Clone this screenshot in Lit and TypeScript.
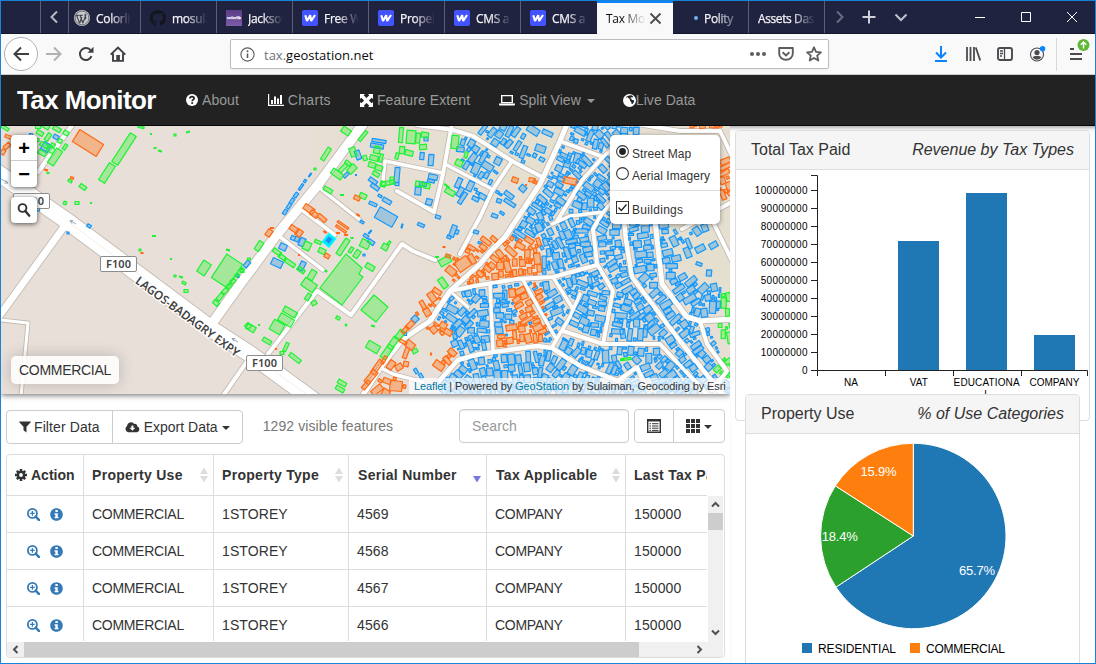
import { LitElement, html, css, svg } from "lit";
import { customElement } from "lit/decorators.js";

/* ---------- geometry of the map ---------- */
type Pt = [number, number];
type Road = { w: number; p: Pt[] };
type Box = [number, number, number, number, number];
type Kind = "blue" | "green" | "orange";

const roads: Road[] = [
  { w: 3, p: [[0, 320], [28, 323], [21, 396]] },
  { w: 7, p: [[66, 224], [0, 315]] },
  { w: 4.5, p: [[73, 124], [38, 172]] },
  { w: 4, p: [[248, 360], [223, 396]] },
  { w: 3.5, p: [[317, 186], [360, 220]] },
  { w: 3.5, p: [[298, 207], [335, 235]] },
  { w: 3.5, p: [[279, 236], [323, 270]] },
  { w: 4, p: [[268, 354], [317, 291], [351, 315], [402, 244], [413, 251], [435, 260]] },
  { w: 3.5, p: [[383, 180], [385, 161], [443, 173]] },
  { w: 4, p: [[452, 124], [443, 174], [434, 212], [397, 191]] },
  { w: 4, p: [[417, 125], [453, 130], [473, 136], [512, 161], [542, 177]] },
  { w: 3.5, p: [[445, 164], [490, 188]] },
  { w: 4, p: [[512, 161], [492, 191], [480, 217], [460, 254]] },
  { w: 5, p: [[361, 398], [383, 364], [403, 339], [430, 321], [450, 291], [480, 264], [490, 252], [505, 237], [540, 184], [560, 141], [567, 124]] },
  { w: 4, p: [[450, 291], [480, 285], [517, 279], [553, 277], [597, 265]] },
  { w: 3, p: [[453, 294], [468, 307]] },
  { w: 3.5, p: [[383, 369], [393, 374], [423, 382]] },
  { w: 4.5, p: [[440, 380], [458, 360], [480, 354], [537, 346], [552, 348], [580, 366], [618, 381], [637, 367], [647, 389]] },
  { w: 4, p: [[560, 141], [603, 157], [583, 179], [557, 221]] },
  { w: 4, p: [[614, 148], [603, 157]] },
  { w: 3.5, p: [[552, 224], [570, 216], [603, 212], [612, 202]] },
  { w: 4, p: [[603, 212], [593, 229], [597, 264], [613, 291], [603, 344]] },
  { w: 3.5, p: [[553, 277], [573, 309]] },
  { w: 3.5, p: [[580, 294], [570, 317], [552, 347]] },
  { w: 3.5, p: [[523, 280], [555, 337]] },
  { w: 3.5, p: [[490, 284], [493, 351]] },
  { w: 4, p: [[563, 331], [603, 344], [660, 344], [707, 394]] },
  { w: 4.5, p: [[622, 200], [626, 240], [632, 277], [680, 341], [722, 394]] },
  { w: 5, p: [[650, 180], [656, 230], [662, 284], [687, 317], [700, 321], [732, 319]] },
  { w: 4, p: [[700, 321], [707, 344], [727, 371], [712, 390]] },
  { w: 4, p: [[682, 229], [732, 202]] },
  { w: 4, p: [[700, 190], [714, 224], [732, 261]] },
  { w: 4, p: [[637, 124], [680, 131], [720, 131], [732, 156]] },
  { w: 9.5, p: [[213, 322], [241, 283], [275, 237], [317, 186], [366, 120]] },
  { w: 16, p: [[-6, 170], [67, 221], [213, 330], [250, 354], [320, 405]] },
];

const green: Box[] = [
  [124, 149, 34, 7, -57], [107, 173, 20, 7, -57], [55, 157, 17, 7, -57], [227, 271, 28, 19, -57], [204, 268, 13, 9, -57],
  [83, 187, 7, 4, 35], [70, 181, 4, 2, 30], [65, 203, 3, 3, 20], [77, 203, 4, 3, 0], [91, 203, 1, 1, 0], [154, 236, 3, 1, 0],
  [140, 250, 2, 2, 0], [181, 277, 3, 1, 20], [175, 276, 2, 2, 0], [184, 283, 4, 2, 30], [186, 291, 4, 3, 0], [171, 259, 1, 1, 0],
  [216, 303, 6, 4, 40], [220, 297, 8, 4, -50], [225, 291, 6, 4, -45], [229, 286, 5, 4, -45], [233, 281, 5, 4, -45], [237, 275, 4, 3, -45], [242, 270, 4, 3, -45],
  [228, 250, 3, 1, 10], [248, 326, 5, 5, 45], [175, 135, 2, 2, 0], [188, 132, 3, 1, -20], [155, 148, 2, 1, 0], [160, 151, 3, 1, 20], [141, 127, 6, 2, 15], [151, 134, 1, 1, 0],
  [48, 173, 2, 1, 0], [45, 126, 9, 4, 30], [57, 129, 8, 4, 30], [40, 133, 7, 4, 30], [48, 137, 8, 4, -55], [60, 141, 4, 4, 30], [66, 133, 5, 4, 30], [44, 145, 8, 4, 30], [51, 150, 7, 5, 30], [42, 153, 8, 4, 30], [53, 145, 4, 3, 30], [5, 128, 8, 3, 30], [15, 138, 3, 2, 0], [38, 127, 5, 3, 0], [65, 147, 6, 3, -55], [37, 140, 4, 3, 0],
  [346, 131, 9, 6, 35], [363, 136, 12, 3, -50], [326, 154, 14, 4, -57], [315, 169, 2, 2, 0], [353, 152, 6, 9, -20], [365, 158, 4, 5, -20],
  [377, 150, 6, 7, 15], [374, 158, 8, 5, 15], [381, 158, 3, 8, 15], [372, 165, 7, 5, 15], [379, 168, 7, 5, 15], [376, 174, 7, 4, 30], [383, 184, 5, 5, 15],
  [401, 135, 4, 15, 5], [411, 137, 9, 13, 5], [418, 138, 4, 10, 5], [402, 150, 5, 7, 5], [409, 153, 8, 5, 15], [425, 135, 7, 5, 10], [423, 147, 7, 5, -5], [397, 156, 3, 6, 15], [455, 142, 7, 13, 5], [459, 163, 7, 6, 25], [466, 155, 3, 6, 15],
  [337, 174, 12, 6, 35], [352, 169, 9, 6, -45], [343, 168, 10, 4, -45], [348, 163, 6, 3, 40], [328, 190, 9, 4, 30], [342, 195, 3, 1, 0], [363, 196, 7, 5, 25], [388, 183, 13, 4, -10], [392, 180, 4, 6, 0], [419, 184, 7, 5, 10], [427, 186, 6, 5, 10], [450, 192, 10, 5, 30], [447, 186, 6, 1, 40],
  [259, 246, 10, 5, -57], [242, 271, 4, 3, 0], [249, 259, 3, 2, 0], [277, 252, 9, 4, 35], [282, 257, 7, 4, 35], [290, 263, 11, 4, 35], [301, 270, 8, 4, 35], [312, 275, 10, 6, -60], [307, 246, 7, 8, 25], [322, 251, 7, 5, 25], [318, 242, 7, 3, 25],
  [343, 247, 18, 5, -57], [351, 250, 6, 3, -57], [357, 254, 8, 5, -57], [352, 238, 2, 1, 0], [365, 244, 9, 8, 25], [385, 247, 6, 6, 30], [389, 243, 4, 2, -50], [370, 267, 9, 5, 30], [326, 271, 2, 1, 40],
  [445, 261, 12, 7, -30], [443, 283, 11, 6, 55], [437, 257, 3, 1, 0], [309, 285, 14, 9, 35], [308, 297, 7, 4, -57], [314, 303, 5, 4, -30],
  [290, 312, 14, 6, 30], [286, 320, 15, 8, 30], [277, 327, 12, 11, 30], [251, 328, 9, 6, 30], [267, 341, 9, 4, 30], [295, 358, 13, 4, 38], [286, 347, 3, 9, 25], [282, 353, 4, 3, 0], [338, 318, 4, 3, 30], [346, 325, 2, 1, 60], [259, 325, 1, 1, 0], [373, 347, 13, 8, 30], [373, 326, 3, 1, 20],
  [387, 352, 15, 6, -55], [393, 343, 13, 6, -55], [400, 335, 10, 6, -55], [342, 383, 9, 4, 30], [340, 389, 9, 4, 30], [415, 351, 5, 4, -30], [626, 359, 10, 2, -8], [622, 360, 3, 1, 0],
];
const blue: Box[] = [
  [89, 226, 4, 3, 30], [68, 233, 2, 2, 0], [46, 147, 8, 8, 30], [56, 137, 5, 4, 30], [31, 135, 3, 3, 0], [38, 209, 3, 4, 0], [247, 264, 7, 4, -50], [238, 276, 2, 3, 0],
  [379, 141, 14, 3, 10], [377, 146, 13, 4, 10], [358, 155, 5, 9, -20], [422, 156, 4, 7, 5], [431, 160, 5, 11, 5], [426, 139, 4, 4, 0], [346, 175, 6, 3, -45], [397, 175, 5, 15, 5], [397, 184, 4, 3, 5], [433, 177, 9, 5, 12], [431, 181, 7, 3, 12], [418, 191, 6, 8, 5], [423, 184, 7, 4, 10], [429, 202, 6, 6, 15],
  [373, 181, 9, 4, 35], [375, 187, 9, 4, 35], [387, 201, 9, 4, 30], [380, 196, 4, 2, 30], [373, 204, 8, 3, 25], [386, 217, 20, 12, 30], [402, 226, 1, 4, 15], [421, 225, 7, 3, 25], [438, 217, 5, 3, 20], [453, 231, 5, 12, 20], [449, 237, 4, 3, 20], [457, 232, 3, 4, 20], [362, 222, 4, 2, 30], [370, 232, 4, 1, -50], [366, 236, 5, 3, 35], [371, 242, 7, 4, 35], [364, 255, 2, 2, 0],
  [302, 242, 5, 8, 25], [297, 239, 4, 5, 25], [293, 238, 4, 4, 25], [283, 247, 7, 6, 25], [277, 263, 11, 7, 25], [302, 266, 5, 9, 25], [285, 212, 5, 3, -55], [289, 206, 6, 3, -55], [292, 201, 6, 3, -55], [296, 195, 5, 3, -55], [301, 187, 7, 2, -55], [305, 181, 3, 2, -55], [310, 175, 4, 1, -55], [356, 175, 1, 1, 0], [415, 319, 6, 6, -45], [405, 334, 3, 3, 0], [416, 371, 3, 5, -30], [421, 376, 3, 5, -30], [476, 232, 5, 3, 20], [480, 243, 4, 2, 20], [709, 273, 5, 6, 5], [699, 264, 6, 3, 20],
];
const orange: Box[] = [
  [88, 143, 28, 14, 32], [72, 178, 3, 2, 20], [46, 170, 3, 1, 10], [7, 146, 7, 4, -40], [3, 152, 4, 5, 30], [9, 137, 8, 3, 20], [15, 149, 3, 3, 0], [142, 253, 2, 1, 0],
  [309, 209, 11, 6, 35], [314, 214, 8, 5, 35], [322, 218, 10, 4, 40], [294, 229, 9, 5, 35], [299, 233, 6, 7, 35], [269, 233, 7, 5, -55], [272, 228, 3, 1, 0], [343, 225, 13, 2, 35], [341, 229, 12, 2, 35], [338, 233, 3, 1, 0], [346, 235, 3, 1, 0], [325, 232, 3, 1, 30], [357, 198, 6, 4, 25], [327, 256, 5, 4, 30], [299, 255, 1, 1, 0], [276, 349, 1, 1, 0], [358, 215, 3, 1, 30],
  [463, 264, 14, 11, -35], [451, 271, 10, 7, 40], [472, 259, 5, 10, -30], [432, 297, 10, 6, 55], [427, 312, 8, 6, 60], [423, 305, 9, 4, 60], [410, 325, 9, 5, -45], [405, 330, 8, 4, -45], [410, 345, 9, 7, 40], [403, 342, 8, 3, 30], [406, 353, 4, 11, 20],
  [384, 360, 3, 8, 30], [377, 367, 16, 5, -55], [371, 377, 15, 6, -50], [366, 385, 10, 4, -50], [391, 365, 9, 6, -55], [399, 367, 7, 6, -30], [396, 386, 12, 10, 5], [387, 381, 8, 5, 20], [377, 390, 12, 6, -40], [406, 364, 5, 5, 10], [431, 354, 1, 2, 0], [444, 247, 2, 1, 0], [448, 256, 5, 3, 20],
  [515, 180, 6, 5, 20], [532, 180, 6, 4, 10], [526, 185, 1, 1, 0], [570, 181, 13, 6, 12], [535, 182, 4, 3, 20],
];

type Zone = { kind: Kind; tries: number; poly: Pt[] };
const zones: Zone[] = [
  { kind: "orange", tries: 2200, poly: [[449, 262], [462, 250], [492, 236], [540, 238], [540, 273], [512, 278], [480, 284], [448, 284]] },
  { kind: "orange", tries: 1300, poly: [[510, 290], [534, 282], [543, 300], [550, 330], [540, 342], [508, 342], [511, 325], [526, 322]] },
  { kind: "orange", tries: 150, poly: [[498, 335], [510, 335], [510, 350], [500, 350]] },
  { kind: "orange", tries: 300, poly: [[430, 320], [447, 325], [450, 335], [436, 332], [420, 325]] },
  { kind: "orange", tries: 300, poly: [[412, 318], [428, 294], [447, 284], [448, 293], [432, 318]] },
  { kind: "orange", tries: 300, poly: [[435, 366], [455, 350], [458, 362], [440, 378]] },
  { kind: "orange", tries: 250, poly: [[385, 374], [405, 378], [405, 394], [370, 394]] },
  { kind: "orange", tries: 200, poly: [[719, 158], [730, 158], [730, 195], [719, 195]] },
  { kind: "orange", tries: 150, poly: [[690, 124], [722, 124], [722, 131], [690, 131]] },
  { kind: "green", tries: 150, poly: [[720, 290], [731, 290], [731, 345], [720, 335]] },
  { kind: "green", tries: 300, poly: [[716, 354], [731, 360], [731, 378], [717, 375]] },
  { kind: "blue", tries: 100, poly: [[482, 155], [500, 155], [500, 196], [480, 200]] },
  { kind: "blue", tries: 330, poly: [[456, 130], [490, 146], [490, 180], [475, 178], [462, 168]] },
  { kind: "blue", tries: 140, poly: [[455, 172], [485, 190], [470, 205], [455, 192]] },
  { kind: "blue", tries: 420, poly: [[480, 124], [520, 124], [505, 155], [485, 140]] },
  { kind: "blue", tries: 40, poly: [[505, 130], [550, 130], [540, 170], [510, 160]] },
  { kind: "blue", tries: 36, poly: [[485, 220], [512, 165], [536, 180], [500, 225]] },
  { kind: "blue", tries: 50, poly: [[668, 226], [712, 226], [716, 250], [684, 262], [672, 262]] },
  {
    kind: "blue", tries: 36000, poly: [[452, 296], [490, 283], [540, 278], [540, 240], [503, 243], [541, 188], [566, 124], [640, 124],
      [612, 205], [660, 200], [674, 272], [721, 290], [721, 318], [704, 322], [730, 372], [731, 395], [640, 395], [445, 395], [440, 381], [460, 358], [444, 330], [434, 320]],
  },
];

let seed = 20117;
const rnd = () => {
  seed = (seed * 1664525 + 1013904223) >>> 0;
  return seed / 4294967296;
};
const inside = (x: number, y: number, p: Pt[]) => {
  let r = false;
  for (let i = 0, j = p.length - 1; i < p.length; j = i++) {
    if (p[i][1] > y !== p[j][1] > y && x < ((p[j][0] - p[i][0]) * (y - p[i][1])) / (p[j][1] - p[i][1]) + p[i][0]) r = !r;
  }
  return r;
};
const nearest = (x: number, y: number) => {
  let d = 1e9, a = 0;
  for (const r of roads) {
    for (let i = 1; i < r.p.length; i++) {
      const [x1, y1] = r.p[i - 1], [x2, y2] = r.p[i];
      const dx = x2 - x1, dy = y2 - y1;
      const t = Math.max(0, Math.min(1, ((x - x1) * dx + (y - y1) * dy) / (dx * dx + dy * dy)));
      const e = Math.hypot(x - x1 - t * dx, y - y1 - t * dy) - r.w / 2;
      if (e < d) { d = e; a = Math.atan2(dy, dx); }
    }
  }
  return { d, a: (a * 180) / Math.PI };
};

const built: Record<Kind, Box[]> = { blue: [...blue], green: [...green], orange: [...orange] };
const placed: Box[] = [...blue, ...green, ...orange];
for (const z of zones) {
  const xs = z.poly.map((q) => q[0]), ys = z.poly.map((q) => q[1]);
  const x0 = Math.min(...xs), y0 = Math.min(...ys), dx = Math.max(...xs) - x0, dy = Math.max(...ys) - y0;
  for (let k = 0; k < z.tries; k++) {
    const x = x0 + rnd() * dx, y = y0 + rnd() * dy;
    if (!inside(x, y, z.poly)) continue;
    const n = nearest(x, y);
    const small = k > z.tries * 0.6;
    const w = small ? 1.5 + rnd() * 2.5 : 3.5 + rnd() * 3.5, h = small ? 1.5 + rnd() * 4 : 6 + rnd() * 7;
    if (n.d < h / 2 + 0.5) continue;
    const rad = (n.a * Math.PI) / 180, c = Math.cos(rad), s = Math.sin(rad);
    let hit = false;
    for (const b of placed) {
      const ux = b[0] - x, uy = b[1] - y;
      if (Math.abs(ux) > 22 || Math.abs(uy) > 22) continue;
      if (Math.abs(ux * c + uy * s) < (w + b[2]) / 2 + 0.35 && Math.abs(-ux * s + uy * c) < (h + b[3]) / 2 + 0.35) { hit = true; break; }
    }
    if (hit) continue;
    const box: Box = [x, y, w, h, n.a + (rnd() - 0.5) * 16];
    placed.push(box);
    built[z.kind].push(box);
  }
}
const boxPath = ([x, y, w, h, a]: Box) => {
  const r = (a * Math.PI) / 180, c = Math.cos(r), s = Math.sin(r);
  const q = (u: number, v: number) => `${(x + u * c - v * s).toFixed(1)} ${(y + u * s + v * c).toFixed(1)}`;
  return `M${q(-w / 2, -h / 2)}L${q(w / 2, -h / 2)}L${q(w / 2, h / 2)}L${q(-w / 2, h / 2)}Z`;
};
const kindPath = (k: Kind) => built[k].map(boxPath).join("");
const line = (p: Pt[]) => p.map((q) => q.join(",")).join(" ");

/* ---------- icons ---------- */
const icon = (name: string, w: number, h: number, body: unknown, box = `0 0 ${w} ${h}`) =>
  html`<svg class="ic ${name}" width=${w} height=${h} viewBox=${box}>${body}</svg>`;

const infoCircle = (s: number) => icon("info", s, s, svg`<path fill="currentColor" d="M256 8C119 8 8 119 8 256s111 248 248 248 248-111 248-248S393 8 256 8zm-45 72h95v75h-95zm125 325H180v-55h31V265h-31v-55h125v140h31z"/>`, "0 0 512 512");
const question = icon("q", 12, 12, svg`<circle cx="6" cy="6" r="6" fill="#fff"/><path d="M3.900 4.500C4 3.300 4.900 2.700 6 2.700c1.200 0 2.100.7 2.100 1.700C8.100 5.700 6.200 5.700 6.200 7.200" fill="none" stroke="#222" stroke-width="1.700"/><rect x="5.300" y="8.200" width="1.800" height="1.700" fill="#222"/>`);
const bars = icon("b", 16, 14, svg`<path fill="#fff" d="M0 1h1.200v10.800H16V13H0zM3 7h2v4H3zM6 3.500h2V11H6zM9 5.500h2V11H9zM12 2h2v9h-2z"/>`);
const extent = icon("e", 13, 13, svg`<path fill="#fff" d="M0 0h5L3.700 1.300 6.500 4.100 9.300 1.300 8 0h5v5L11.700 3.700 8.900 6.500 11.700 9.300 13 8v5H8l1.300-1.300-2.800-2.800-2.800 2.800L5 13H0V8l1.300 1.300 2.800-2.800-2.800-2.800L0 5z"/>`);
const laptop = icon("l", 16, 12, svg`<path fill="none" stroke="#fff" stroke-width="1.400" d="M2.700 1.600h10.600v7H2.700z"/><path fill="#fff" d="M0 9.500h16v1q0 1-1 1H1q-1 0-1-1z"/>`);
const globe = icon("g", 13, 13, svg`<circle cx="6.500" cy="6.500" r="6.500" fill="#fff"/><path fill="#222" d="M6.200 1.500 8.500 1.200l1.800 1.500-1 .9-1.300-.3-.8 1 1.300.5.400 1.200 1.700.1.500 1.400-1.200 2.200-1.300.4-.3-2-1.200-1.200-.2-1.500L5.700 4.200 4.300 3.100 3.100 4l.1-1.200z"/>`);
const filter = icon("f", 12, 12, svg`<path fill="#333" d="M.3.500h11.400q.3.600-.2 1.100L7.500 5.700V11.500L4.500 9.300V5.700L.5 1.600Q0 1.100.3.500z"/>`);
const cloud = icon("c", 15, 12, svg`<path fill="#333" d="M3.500 11.300A3.400 3.400 0 0 1 2 5.100 4 4 0 0 1 9.300 3a2.300 2.300 0 0 1 3 2.500A3 3 0 0 1 12 11.300z"/><path fill="#fff" d="M6.400 4.500h2v2.300h1.900L7.400 9.800 4.500 6.800h1.900z"/>`);
const gear = icon("gear", 12, 12, svg`<g stroke="#333" stroke-width="2.600"><path d="M6 0v12M0 6h12M1.800 1.800l8.400 8.400M10.200 1.800l-8.400 8.400"/></g><circle cx="6" cy="6" r="4.300" fill="#333"/><circle cx="6" cy="6" r="1.900" fill="#fff"/>`);
const zoomIn = icon("z", 13, 13, svg`<g fill="none" stroke="#337ab7"><circle cx="5.400" cy="5.400" r="4.500" stroke-width="1.800"/><path d="M8.700 8.700l3.400 3.400" stroke-width="2.500" stroke-linecap="round"/><path d="M5.400 3.100v4.600M3.100 5.400h4.600" stroke-width="1.200"/></g>`);

/* browser chrome */
const wp = icon("wp", 16, 16, svg`<circle cx="8" cy="8" r="8" fill="#c9cacc"/><circle cx="8" cy="8" r="6.900" fill="none" stroke="#55575f" stroke-width=".8"/><path d="M2.600 5.400l3 8M6 5.400l2.900 7.800M5.600 13.200L7.900 7M8.900 13l3-8M1.800 5.400h3M5.300 5.400h3.400M12 4.500q-1.600-.6-.8 1.400 1 1.700.4 3.300" fill="none" stroke="#44464f" stroke-width="1.200"/>`);
const gh = icon("gh", 16, 16, svg`<path fill="#15161c" fill-rule="evenodd" d="M8 0C3.580 0 0 3.580 0 8c0 3.540 2.290 6.530 5.470 7.590.4.070.55-.17.55-.38 0-.19-.01-.82-.01-1.490-2.010.37-2.530-.49-2.690-.94-.09-.23-.48-.94-.82-1.130-.28-.15-.68-.52-.01-.53.63-.01 1.080.58 1.230.82.72 1.210 1.870.87 2.330.66.07-.52.28-.87.51-1.070-1.780-.2-3.640-.89-3.640-3.950 0-.87.31-1.590.82-2.150-.08-.2-.36-1.020.08-2.120 0 0 .67-.21 2.200.82.64-.18 1.320-.27 2-.27s1.360.09 2 .27c1.530-1.040 2.200-.82 2.200-.82.44 1.100.16 1.920.08 2.120.51.56.82 1.270.82 2.150 0 3.070-1.870 3.750-3.650 3.950.29.25.54.73.54 1.480 0 1.070-.01 1.930-.01 2.200 0 .21.15.46.55.38A8.010 8.010 0 0 0 16 8c0-4.420-3.580-8-8-8z"/>`);
const colorlib = html`<span class="clib">colorlib</span>`;
const webflow = html`<svg width="16" height="16" viewBox="0 0 16 16"><rect width="16" height="16" rx="2" fill="#4353ff"/><path d="M3.300 5.300L5 11L8.200 5.300L9.200 11L13 5" fill="none" stroke="#fff" stroke-width="2.100" stroke-linejoin="bevel"/></svg>`;

const chev = (d: string, c: string, w = 16) => html`<svg width=${w} height="16" viewBox="0 0 16 16"><path d=${d} fill="none" stroke=${c} stroke-width="2"/></svg>`;

type Tab = { ico?: unknown; text: string; cls?: string };
const tabs: Tab[] = [
  { ico: wp, text: "Colorlib", cls: "first" },
  { ico: gh, text: "mosula" },
  { ico: colorlib, text: "Jackson" },
  { ico: webflow, text: "Free W" },
  { ico: webflow, text: "Propel" },
  { ico: webflow, text: "CMS a" },
  { ico: webflow, text: "CMS a", cls: "nob" },
  { text: "Tax Mon", cls: "active" },
  { ico: html`<i class="dot"></i>`, text: "Polity", cls: "loading" },
  { text: "Assets Dash", cls: "last" },
];

@customElement("browser-chrome")
class BrowserChrome extends LitElement {
  static styles = css`
    :host { display: block; font-family: "Open Sans", "Noto Sans", sans-serif; }
    svg { display: block; flex: none; }
    .tabs { display: flex; height: 33px; background: #202340; box-sizing: border-box; border-bottom: 1px solid #15152b; color: #f4f4f8; }
    .lead, .prev, .tab { box-sizing: border-box; flex: none; border-right: 1px solid #5c5e74; height: 32px; }
    .lead { width: 40px; }
    .prev { width: 28px; display: flex; align-items: center; justify-content: center; }
    .tab { width: 76px; display: flex; align-items: center; gap: 6px; padding: 2px 9px 0; overflow: hidden; font-size: 12px; letter-spacing: -0.3px; -webkit-text-stroke: 0.25px; }
    .tab.first { width: 72px; padding-left: 5px; }
    .tab.nob, .tab.active { border-right: 0; }
    .tab.active { background: #f9f9fa; color: #0c0c0d; border-top: 2px solid #0a84ff; padding-top: 0; height: 33px; -webkit-text-stroke: 0; gap: 3px; padding-right: 11px; }
    .tab.loading { padding-left: 20px; gap: 6px; }
    .txt { flex: 1; overflow: hidden; white-space: nowrap; -webkit-mask-image: linear-gradient(90deg, #000 40%, transparent 100%); mask-image: linear-gradient(90deg, #000 40%, transparent 100%); }
    .last { letter-spacing: -0.4px; }
    .last .txt { -webkit-mask-image: linear-gradient(90deg, #000 60%, transparent 100%); mask-image: linear-gradient(90deg, #000 60%, transparent 100%); }
    .loading .txt { -webkit-mask-image: none; mask-image: linear-gradient(90deg, #000 30%, #0006 80%); }
    .dot { width: 4px; height: 4px; border-radius: 50%; background: #6fb4f5; flex: none; margin-left: 1px; }
    .clib { width: 16px; height: 16px; flex: none; background: linear-gradient(#5a3d86, #7d5ca8); color: #fff; font-size: 4px; line-height: 15px; text-align: center; letter-spacing: 0; }
    .ctl { display: flex; align-items: center; flex: 1; padding-left: 6px; }
    .ctl svg.plus { margin-left: 14px; }
    .ctl svg.down { margin-left: 16px; }
    .win { display: flex; margin-left: auto; gap: 34px; padding-right: 17px; align-items: center; }
    .bar { display: flex; align-items: center; height: 41px; box-sizing: border-box; background: #f9f9fa; border-bottom: 1px solid #ccc; padding-left: 3px; }
    .btn { width: 32px; height: 34px; display: grid; place-items: center; flex: none; }
    .back { width: 32px; height: 32px; border: 1px solid #b1b1b3; border-radius: 50%; background: #fff; }
    .url { margin-left: 96px; width: 599px; height: 30px; box-sizing: border-box; border: 1px solid #bdbdbf; border-radius: 2px; background: #fff; display: flex; align-items: center; padding: 0 6px 0 9px; font-size: 13px; box-shadow: 0 1px 3px #0000000d; }
    .addr { margin-left: 9px; color: #0c0c0d; letter-spacing: 0; flex: 1; padding-top: 1px; }
    .addr span { color: #737378; }
    .url .acts { display: flex; gap: 12px; align-items: center; }
    .right { display: flex; align-items: center; margin-left: 96px; }
    .sep { width: 1px; height: 33px; background: #d7d7db; margin: 0 5px 0 3px; }
  `;
  render() {
    return html`
      <div class="tabs">
        <div class="lead"></div>
        <div class="prev">${chev("M10 2.500L4.500 8L10 13.500", "#b8b9c4")}</div>
        ${tabs.map((t) => html`<div class="tab ${t.cls ?? ""}">${t.ico ?? ""}<span class="txt">${t.text}</span>${t.cls === "active"
          ? html`<svg width="13" height="13" viewBox="0 0 13 13"><path d="M1.500 1.500l10 10M11.500 1.500l-10 10" stroke="#4a4a4f" stroke-width="1.800"/></svg>` : ""}</div>`)}
        <div class="ctl">
          ${chev("M6 2.500L11.500 8L6 13.500", "#6b6d80")}
          <svg class="plus" width="16" height="16" viewBox="0 0 16 16"><path d="M8 1.500v13M1.500 8h13" stroke="#d0d0d8" stroke-width="2"/></svg>
          <svg class="down" width="16" height="16" viewBox="0 0 16 16"><path d="M2.500 5.500L8 11L13.500 5.500" fill="none" stroke="#c0c1cb" stroke-width="2"/></svg>
          <div class="win">
            <svg width="12" height="12"><path d="M1 6.500h10" stroke="#fff"/></svg>
            <svg width="12" height="12"><path d="M1.500 1.500h9v9h-9z" fill="none" stroke="#fff"/></svg>
            <svg width="12" height="12"><path d="M1 1l10 10M11 1L1 11" stroke="#fff"/></svg>
          </div>
        </div>
      </div>
      <div class="bar">
        <div class="btn back"><svg width="18" height="18" viewBox="0 0 18 18"><path d="M17 9H2.500M9 2.500L2.500 9L9 15.500" fill="none" stroke="#3f3f44" stroke-width="2"/></svg></div>
        <div class="btn"><svg width="18" height="18" viewBox="0 0 18 18"><path d="M1 9h14.500M9 2.500L15.500 9L9 15.500" fill="none" stroke="#b1b1b3" stroke-width="2"/></svg></div>
        <div class="btn"><svg width="16" height="16" viewBox="0 0 16 16"><path d="M13.500 10.200A6 6 0 1 1 12.800 4.500" fill="none" stroke="#3f3f44" stroke-width="2"/><path d="M15.500 0.800v6h-6z" fill="#3f3f44"/></svg></div>
        <div class="btn"><svg width="16" height="16" viewBox="0 0 16 16"><path d="M.7 8.600L8 1.500l7.300 7.100M3 7.500v7.400h10V7.500" fill="none" stroke="#3f3f44" stroke-width="1.900"/><path d="M6.300 9h3.600v6H6.300z" fill="#3f3f44"/></svg></div>
        <div class="url">
          <svg width="15" height="15" viewBox="0 0 15 15"><circle cx="7.500" cy="7.500" r="6.600" fill="none" stroke="#5c5c61" stroke-width="1.100"/><path d="M7.500 6.500v4.500" stroke="#5c5c61" stroke-width="1.600"/><circle cx="7.500" cy="4.300" r="1" fill="#5c5c61"/></svg>
          <div class="addr"><span>tax.</span>geostation.net</div>
          <div class="acts">
            <svg width="16" height="16" viewBox="0 0 16 16"><g fill="#5c5c61"><circle cx="2" cy="8" r="2"/><circle cx="8" cy="8" r="2"/><circle cx="14" cy="8" r="2"/></g></svg>
            <svg width="16" height="16" viewBox="0 0 16 16"><path d="M1.200 2h13.600v5.500a6.800 6.300 0 0 1-13.600 0z" fill="none" stroke="#5c5c61" stroke-width="1.900" stroke-linejoin="round"/><path d="M4.600 6.300L8 9.500l3.400-3.200" fill="none" stroke="#5c5c61" stroke-width="1.900"/></svg>
            <svg width="16" height="16" viewBox="0 0 16 16"><path d="M8 1.300l2 4.500 4.900.5-3.700 3.300 1.100 4.900L8 12l-4.300 2.500 1.100-4.900L1.100 6.300 6 5.800z" fill="none" stroke="#5c5c61" stroke-width="1.800" stroke-linejoin="round"/></svg>
          </div>
        </div>
        <div class="right">
          <div class="btn"><svg width="16" height="16" viewBox="0 0 16 16"><path d="M8 0v11.500M3 6.500l5 5 5-5M2 15h12" fill="none" stroke="#0a84ff" stroke-width="2"/></svg></div>
          <div class="btn"><svg width="16" height="16" viewBox="0 0 16 16"><path d="M2 1v14M5.500 1v14M9 1v14M10.800 1.500l4.400 13" stroke="#4a4a4f" stroke-width="1.800"/></svg></div>
          <div class="btn"><svg width="16" height="16" viewBox="0 0 16 16"><rect x="1" y="2" width="14" height="12" rx="2" fill="none" stroke="#4a4a4f" stroke-width="1.900"/><path d="M7.500 2v12M3 5h3M3 7.500h3M3 10h2" stroke="#4a4a4f" stroke-width="1.300"/></svg></div>
          <div class="btn"><svg width="17" height="16" viewBox="0 0 17 16"><circle cx="8" cy="8.500" r="6.500" fill="none" stroke="#4a4a4f" stroke-width="1.100"/><circle cx="8" cy="6.500" r="2.600" fill="#4a4a4f"/><path d="M3.500 11.300q1-1.500 4.500-1.500t4.500 1.500a5.500 5.500 0 0 1-9 0z" fill="#4a4a4f"/><circle cx="13.600" cy="2.800" r="2.700" fill="#0a84ff"/></svg></div>
          <div class="sep"></div>
          <div class="btn"><svg width="24" height="32" viewBox="0 0 24 32"><path d="M4 11h4M4 16h12M4 21h12" stroke="#4a4a4f" stroke-width="2"/><circle cx="17.500" cy="7" r="6" fill="#5fb832"/><path d="M17.500 10.500V4.500M14.700 6.700l2.800-2.700 2.800 2.700" fill="none" stroke="#fff" stroke-width="1.500"/></svg></div>
        </div>
      </div>`;
  }
}

@customElement("tax-map")
class TaxMap extends LitElement {
  static styles = css`
    :host { display: block; position: relative; height: 268px; box-shadow: 0 1px 6px #0009; font-family: "Liberation Sans", Arial, sans-serif; color: #333; }
    .canvas { display: block; width: 729px; height: 268px; }
    .zoom, .find, .layers, .note, .attr { position: absolute; }
    .zoom, .find { left: 10px; width: 26px; background: #fff; border-radius: 4px; box-shadow: 0 1px 5px #000000a6; }
    .zoom { top: 9px; }
    .zoom b { display: block; height: 25px; text-align: center; font: bold 20px/27px "Liberation Sans", Arial, sans-serif; color: #000; }
    .zoom b + b { border-top: 1px solid #ccc; line-height: 26px; height: 26px; }
    .find { top: 71px; height: 26px; display: grid; place-items: center; }
    .layers { left: 609px; top: 9px; width: 110px; height: 89px; box-sizing: border-box; background: #fff; border-radius: 5px; box-shadow: 0 1px 5px #0006; padding: 5px 0 0 6px; font-size: 12px; }
    .layers label { display: flex; align-items: center; height: 22px; gap: 3px; letter-spacing: 0.05px; }
    .layers label span { padding-top: 5px; white-space: nowrap; }
    .layers svg { flex: none; }
    .rule { height: 0; border-top: 1px solid #ddd; margin: 6px 0 5px -6px; }
    .layers .last { letter-spacing: 0.3px; }
    .note { left: 10px; top: 230px; width: 108px; height: 28px; border-radius: 5px; background: #ffffffdd; box-shadow: 0 0 15px #0003; font-size: 14px; line-height: 29px; text-align: center; letter-spacing: -0.3px; }
    .attr { right: 0; bottom: 0; height: 16px; width: 316px; padding-left: 5px; background: #ffffffb3; font-size: 11px; line-height: 17px; white-space: nowrap; letter-spacing: -0.1px; }
    .attr a { color: #0078a8; }
    .street { font: 600 12px "Noto Sans", sans-serif; fill: #444; stroke: #fff; stroke-width: 2.5px; paint-order: stroke; }
    .shield { font: 600 11px "Noto Sans", sans-serif; fill: #444; }
  `;
  render() {
    const shield = (x: number, y: number) => svg`<rect x=${x} y=${y} width="36" height="15" rx="1.500" fill="#fff" stroke="#8d8d8d"/><text class="shield" x=${x + 18} y=${y + 11.5} text-anchor="middle" textLength="25">F100</text>`;
    return html`
      <svg class="canvas" viewBox="1 126 729 268">
        <rect x="0" y="120" width="740" height="280" fill="#e8dfd9"/>
        <path d="M312 120H740V400H470L400 330 440 290 405 250 350 225 310 180z" fill="#e7dfd3"/>
        <path d="M440 126H570L540 185 440 175zM655 200H735V300L690 285 665 225z" fill="#e4dfce"/>
        <g fill="none" stroke="#c3bbb3" stroke-linecap="round" stroke-linejoin="round">${roads.map((r) => svg`<polyline points=${line(r.p)} stroke-width=${r.w + 1.8}/>`)}</g>
        <g fill="none" stroke="#fff" stroke-linecap="round" stroke-linejoin="round">${roads.map((r) => svg`<polyline points=${line(r.p)} stroke-width=${r.w}/>`)}</g>
        <path d="M67 221L213 330M262 362L310 397" fill="none" stroke="#eeeae6" stroke-width=".7"/>
        <path d="M76 224l-6-3.500m2 3l-2-3 3.500.200M1 179l7 4m-2.500-3l2.500 3-3.700.100M238 342l-6-3.500m2 3l-2-3 3.500.200" fill="none" stroke="#8797a5" stroke-width=".8"/>
        <g stroke-linejoin="round" stroke-width="1.200">
          <path d=${kindPath("blue")} fill="#2f9be8" fill-opacity=".38" stroke="#1498fb"/>
          <path d="${kindPath("green")}M346 254L362 268L359 274L363 277L342 305L320 288ZM374 295L388 307L376 322L361 310Z" fill="#35f535" fill-opacity=".38" stroke="#1df233"/>
          <path d=${kindPath("orange")} fill="#ff7a1f" fill-opacity=".42" stroke="#ff6a14"/>
        </g>
        <g transform="rotate(-52 329 241)"><rect x="324" y="236" width="11" height="9" fill="#00e5ff" stroke="#1ff"/><rect x="327" y="238" width="5.500" height="4.500" fill="#1e8cf0"/></g>
        ${shield(13.5, 193.5)}${shield(100.5, 256.5)}${shield(246.5, 355.5)}
        <text class="street" transform="translate(134.500 282.500) rotate(36.500)" textLength="126">LAGOS-BADAGRY EXPY</text>
      </svg>
      <div class="zoom"><b>+</b><b>−</b></div>
      <div class="find"><svg width="16" height="16" viewBox="0 0 16 16"><circle cx="6.500" cy="6" r="3.900" fill="none" stroke="#333" stroke-width="1.900"/><path d="M9.300 9l4 4.700" stroke="#333" stroke-width="2.400" stroke-linecap="round"/></svg></div>
      <div class="layers">
        <label><svg width="13" height="13"><circle cx="6.500" cy="6.500" r="5.900" fill="#fff" stroke="#333" stroke-width="1.100"/><circle cx="6.500" cy="6.500" r="3.400" fill="#222"/></svg><span>Street Map</span></label>
        <label><svg width="13" height="13"><circle cx="6.500" cy="6.500" r="5.900" fill="#fff" stroke="#333" stroke-width="1.100"/></svg><span>Aerial Imagery</span></label>
        <div class="rule"></div>
        <label class="last"><svg width="13" height="13"><rect x=".5" y=".5" width="12" height="12" fill="#fff" stroke="#333"/><path d="M2.500 6.500l2.800 3L10.500 3.500" fill="none" stroke="#222" stroke-width="1.300"/></svg><span>Buildings</span></label>
      </div>
      <div class="note">COMMERCIAL</div>
      <div class="attr"><a>Leaflet</a> | Powered by <a>GeoStation</a> by Sulaiman, Geocoding by Esri</div>`;
  }
}

const cols = [
  { key: "Property Use", sort: "both" },
  { key: "Property Type", sort: "both" },
  { key: "Serial Number", sort: "desc" },
  { key: "Tax Applicable", sort: "both" },
  { key: "Last Tax Paid", sort: "none" },
];
const rows = ["4569", "4568", "4567", "4566"].map((n) => ["COMMERCIAL", "1STOREY", n, "COMPANY", "150000"]);

@customElement("feature-table")
class FeatureTable extends LitElement {
  static styles = css`
    :host { display: block; padding: 15px 5px 0; font: 14px "Liberation Sans", Arial, sans-serif; color: #333; }
    svg { display: block; flex: none; }
    .tools { display: flex; align-items: flex-start; height: 45px; }
    .group { display: flex; border: 1px solid #ccc; border-radius: 4px; height: 34px; box-sizing: border-box; background: #fff; }
    .left { margin-top: 1px; }
    .b { display: flex; align-items: center; gap: 4px; padding: 0 12px; box-sizing: border-box; white-space: nowrap; }
    .left .b:first-child { gap: 3px; padding-right: 12px; letter-spacing: 0.1px; }
    .b + .b { border-left: 1px solid #ccc; }
    .caret { width: 0; height: 0; border: 4px solid transparent; border-top-color: #333; border-bottom: 0; margin-top: 2px; }
    .count { margin-left: 20px; line-height: 34px; color: #777; letter-spacing: 0.1px; flex: 1; }
    .search { width: 170px; height: 34px; box-sizing: border-box; border: 1px solid #ccc; border-radius: 4px; color: #999; padding-left: 12px; line-height: 33px; letter-spacing: 0.1px; margin-right: 5px; box-shadow: inset 0 1px 1px #00000013; }
    .frame { width: 719px; height: 204px; box-sizing: border-box; border: 1px solid #ddd; border-radius: 4px; overflow: hidden; display: grid; grid-template-columns: 701px 16px; grid-template-rows: 41px 145px 16px; }
    .head, .row { display: grid; grid-template-columns: 77px 130px 135px 138px 139px 160px; }
    .head { grid-area: 1 / 1; font-weight: bold; overflow: hidden; letter-spacing: 0.3px; margin-right: 1px; }
    .body { grid-area: 2 / 1; overflow: hidden; margin-right: 1px; }
    .cell { box-sizing: border-box; border-right: 1px solid #ddd; border-bottom: 1px solid #ddd; padding: 0 8px; display: flex; align-items: center; white-space: nowrap; }
    .head .cell:nth-child(4), .head .cell:nth-child(5) { padding-left: 9px; }
    .head .cell { height: 41px; justify-content: space-between; padding-right: 4px; }
    .head .act { justify-content: flex-start; gap: 4px; letter-spacing: 0; }
    .row .cell { height: 37px; }
    .row .act { padding-left: 20px; gap: 10px; color: #337ab7; }
    .com { letter-spacing: -0.3px; }
    .num { letter-spacing: 0.1px; }
    .v { background: #f0f0f0; grid-area: 2 / 2 / 4 / 3; display: flex; flex-direction: column; align-items: center; margin-right: 1px; }
    .v .thumb { width: 15px; height: 17px; background: #cdcdcd; }
    .v svg:last-child { margin-top: 94px; }
    .h { grid-area: 3 / 1; background: #f0f0f0; display: flex; align-items: center; margin-top: 1px; height: 15px; }
    .h .thumb { width: 615px; height: 15px; background: #cdcdcd; }
    .h svg:last-child { margin-left: auto; }
  `;
  render() {
    const arrow = (d: string) => html`<svg width="17" height="17" viewBox="0 0 17 17"><path d=${d} fill="none" stroke="#505050" stroke-width="2"/></svg>`;
    return html`
      <div class="tools">
        <div class="group left"><div class="b">${filter}Filter Data</div><div class="b">${cloud}Export Data<i class="caret"></i></div></div>
        <div class="count">1292 visible features</div>
        <div class="search">Search</div>
        <div class="group">
          <div class="b"><svg width="14" height="14" viewBox="0 0 14 14"><path d="M.7.700h12.600v12.600H.7z" fill="none" stroke="#333" stroke-width="1.400"/><path d="M0 0h14v2.500H0z" fill="#333"/><path d="M2.500 4.700h1.500M5 4.700h6.500M2.500 7h1.500M5 7h6.500M2.500 9.200h1.500M5 9.200h6.500M2.500 11.400h1.500M5 11.400h6.500" stroke="#333"/></svg></div>
          <div class="b"><svg width="14" height="14" viewBox="0 0 14 14"><path d="M0 0h4v4H0zM5 0h4v4H5zM10 0h4v4h-4zM0 5h4v4H0zM5 5h4v4H5zM10 5h4v4h-4zM0 10h4v4H0zM5 10h4v4H5zM10 10h4v4h-4z" fill="#333"/></svg><i class="caret"></i></div>
        </div>
      </div>
      <div class="frame">
        <div class="head">
          <div class="cell act">${gear}Action</div>
          ${cols.map((c) => html`<div class="cell"><span>${c.key}</span>${c.sort === "both"
            ? html`<svg width="10" height="16" viewBox="0 0 10 16"><path d="M1 7L5 .500L9 7zM1 9L5 15.500L9 9z" fill="#ddd"/></svg>`
            : c.sort === "desc" ? html`<svg width="10" height="16" viewBox="0 0 10 16"><path d="M1 9h8L5 15.500z" fill="#7a78e0"/></svg>` : ""}</div>`)}
        </div>
        <div class="body">
          ${rows.map((r) => html`<div class="row"><div class="cell act">${zoomIn}${infoCircle(13)}</div>${r.map((t) => html`<div class="cell ${/^[A-Z]/.test(t) ? "com" : "num"}">${t}</div>`)}</div>`)}
        </div>
        <div class="v">${arrow("M5 10.500L8.500 7L12 10.500")}<div class="thumb"></div>${arrow("M5 6.500L8.500 10L12 6.500")}</div>
        <div class="h">${arrow("M10.500 5L7 8.500L10.500 12")}<div class="thumb"></div>${arrow("M6.500 5L10 8.500L6.500 12")}</div>
      </div>`;
  }
}

const barData = [
  { name: "NA", y: 370, len: 14 },
  { name: "VAT", y: 241, len: 18 },
  { name: "EDUCATIONA", y: 193, len: 66 },
  { name: "COMPANY", y: 335, len: 50 },
];
const pie = [
  { from: 0, to: 0.657, fill: "#1f77b4", label: "65.7%", x: 977, y: 575 },
  { from: 0.657, to: 0.841, fill: "#2ca02c", label: "18.4%", x: 839.7, y: 541 },
  { from: 0.841, to: 1, fill: "#ff7f0e", label: "15.9%", x: 878.5, y: 476 },
];

@customElement("chart-panel")
class ChartPanel extends LitElement {
  static styles = css`
    :host { display: block; overflow: hidden; background: #fff; font: 16px "Liberation Sans", Arial, sans-serif; color: #333; padding: 4px 5px 0; box-shadow: inset 0 5px 5px -4px #0007; }
    .card { box-sizing: border-box; border: 1px solid #ddd; border-radius: 4px; background: #fff; overflow: hidden; }
    .tax { height: 291px; width: 355px; }
    .use { height: 300px; width: 335px; margin: -27px 0 0 10px; position: relative; }
    .hd { height: 39px; box-sizing: border-box; padding: 0 14px 0 15px; background: #f5f5f5; border-bottom: 1px solid #ddd; display: flex; justify-content: space-between; align-items: center; }
    .hd i { padding-right: 1px; }
    svg { display: block; }
    .ax { font-size: 10px; fill: #000; }
    .pl { font-size: 13px; fill: #fff; }
    .lg { font-size: 12px; fill: #000; }
  `;
  render() {
    const cx = 913.3, cy = 536, r = 92.7;
    const at = (f: number) => `${cx + r * Math.sin(f * 2 * Math.PI)} ${cy - r * Math.cos(f * 2 * Math.PI)}`;
    return html`
      <div class="card tax">
        <div class="hd"><span>Total Tax Paid</span><i>Revenue by Tax Types</i></div>
        <svg width="353" height="250" viewBox="736 170 353 250">
          ${barData.map((b, i) => svg`<rect x=${898 + (i - 1) * 68} y=${b.y} width="41" height=${370 - b.y} fill="#1f77b4"/><text class="ax" x=${851 + i * 67.8} y="386" text-anchor="middle" textLength=${b.len}>${b.name}</text>`)}
          <text class="ax" x="987" y="398" text-anchor="middle">L</text>
          <path d="M811 175.500H817.500V370.500M811 370.500H1087.500V376M817.500 370V376M885.500 370V376M953.500 370V376M1021.500 370V376" fill="none" stroke="#222"/>
          ${Array.from({ length: 11 }, (_, i) => {
            const t = i ? `${i}0000000` : "0";
            return svg`<path d="M811 ${370.5 - i * 18}h6" stroke="#222"/><text class="ax" x="807.500" y=${374 - i * 18} text-anchor="end" textLength=${t.length * 5.85}>${t}</text>`;
          })}
        </svg>
      </div>
      <div class="card use">
        <div class="hd"><span>Property Use</span><i>% of Use Categories</i></div>
        <svg width="333" height="250" viewBox="746 434 333 250">
          ${pie.map((s) => svg`<path d="M${cx} ${cy}L${at(s.from)}A${r} ${r} 0 ${s.to - s.from > 0.5 ? 1 : 0} 1 ${at(s.to)}Z" fill=${s.fill} stroke="#fff"/>`)}
          ${pie.map((s) => svg`<text class="pl" x=${s.x} y=${s.y} text-anchor="middle" textLength="36">${s.label}</text>`)}
          <rect x="802" y="643" width="10" height="10" fill="#1f77b4"/><text class="lg" x="818" y="653" textLength="78">RESIDENTIAL</text>
          <rect x="910" y="643" width="10" height="10" fill="#ff7f0e"/><text class="lg" x="926" y="653" textLength="79">COMMERCIAL</text>
        </svg>
      </div>`;
  }
}

@customElement("app-root")
class AppRoot extends LitElement {
  static styles = css`
    :host { display: flex; flex-direction: column; box-sizing: border-box; width: 1096px; height: 664px; border: 1px solid #1883d7; overflow: hidden; background: #fff; font-family: "Liberation Sans", Arial, sans-serif; }
    nav { height: 51px; flex: none; box-sizing: border-box; background: #222; border-bottom: 1px solid #080808; display: flex; align-items: center; padding-left: 16px; color: #999; font-size: 14px; }
    nav svg { display: block; flex: none; }
    .brand { font-size: 26px; font-weight: bold; color: #fff; width: 169px; letter-spacing: -0.6px; white-space: nowrap; line-height: 50px; }
    .item { display: flex; align-items: center; gap: 4px; white-space: nowrap; margin-right: 29px; letter-spacing: 0.05px; }
    .item:nth-child(3) { letter-spacing: 0.3px; }
    .item.tight { gap: 0; margin-left: -1px; }
    .item:nth-child(4) { letter-spacing: 0.1px; }
    .caret { width: 0; height: 0; border: 4px solid transparent; border-top-color: #999; border-bottom: 0; margin: 2px 0 0 2px; }
    main { display: grid; grid-template-columns: 729px 365px; height: 537px; }
    .left { min-width: 0; overflow: hidden; }
  `;
  render() {
    return html`
      <browser-chrome></browser-chrome>
      <nav>
        <div class="brand">Tax Monitor</div>
        <div class="item">${question}About</div>
        <div class="item">${bars}Charts</div>
        <div class="item">${extent}Feature Extent</div>
        <div class="item">${laptop}Split View <i class="caret"></i></div>
        <div class="item tight">${globe}Live Data</div>
      </nav>
      <main>
        <div class="left"><tax-map></tax-map><feature-table></feature-table></div>
        <chart-panel></chart-panel>
      </main>`;
  }
}
